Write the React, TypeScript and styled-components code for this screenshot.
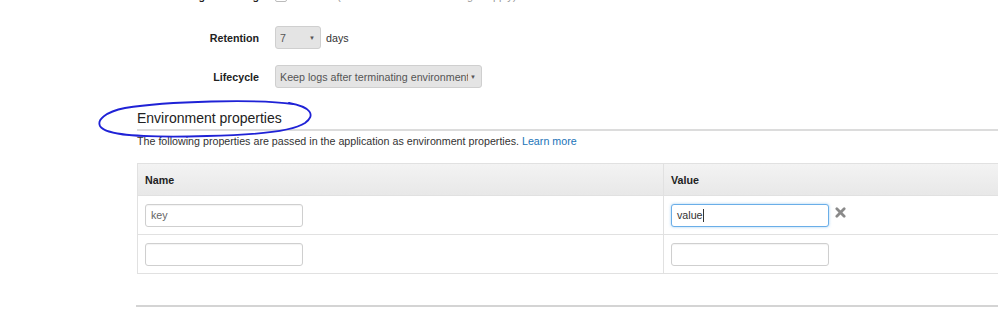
import styled, { createGlobalStyle } from 'styled-components'

const GlobalStyle = createGlobalStyle`
  html, body {
    margin: 0;
    padding: 0;
    background: #fff;
    overflow: hidden;
  }
  body {
    font-family: 'Liberation Sans', Arial, sans-serif;
    color: #333;
  }
`

export default function App() {
  return (
    <Page>
      <GlobalStyle />
      <Form>
        <Row>
          <Label>Log streaming</Label>
          <Control>
            <Check />
            <Muted>Enabled (standard CloudWatch charges apply)</Muted>
          </Control>
        </Row>
        <Row>
          <Label>Retention</Label>
          <Control>
            <FakeSelect width={46}>
              <SelectText>7</SelectText>
              <Caret>▼</Caret>
            </FakeSelect>
            <span>days</span>
          </Control>
        </Row>
        <Row>
          <Label>Lifecycle</Label>
          <Control>
            <FakeSelect width={207}>
              <SelectText>Keep logs after terminating environment</SelectText>
              <Caret>▼</Caret>
            </FakeSelect>
          </Control>
        </Row>
      </Form>

      <Section>
        <Heading>
          Environment properties
          <Scribble viewBox="0 0 216 38" fill="none">
            <path
              d="M196 3 C160 -2 70 0 28 7 C8 11 0 19 3 25 C8 34 40 37 110 35 C160 34 196 30 208 22 C219 14 214 6 192 2"
              stroke="#1f22d6"
              strokeWidth="1.8"
              strokeLinecap="round"
            />
          </Scribble>
        </Heading>
        <Intro>
          The following properties are passed in the application as environment properties.{' '}
          <Link>Learn more</Link>
        </Intro>

        <Table>
          <HeadRow>
            <Cell>Name</Cell>
            <Cell divider>Value</Cell>
          </HeadRow>
          <BodyRow>
            <Cell>
              <TextBox>key</TextBox>
            </Cell>
            <Cell divider>
              <TextBox focused>
                value<Cursor />
              </TextBox>
              <Remove viewBox="0 0 12 12">
                <path d="M2 2 L10 10 M10 2 L2 10" stroke="#8a8a8a" strokeWidth="3" strokeLinecap="round" />
              </Remove>
            </Cell>
          </BodyRow>
          <BodyRow>
            <Cell>
              <TextBox />
            </Cell>
            <Cell divider>
              <TextBox />
            </Cell>
          </BodyRow>
        </Table>

        <Rule />
      </Section>
    </Page>
  )
}

const Page = styled.div`
  width: 998px;
  height: 324px;
  overflow: hidden;
  padding-left: 137px;
  box-sizing: border-box;
`

const Form = styled.div`
  display: flex;
  flex-direction: column;
  gap: 16px;
  margin-top: -16px;
`

const Row = styled.div`
  display: flex;
  align-items: center;
  gap: 16px;
  height: 23px;
  &:first-child {
    margin-bottom: 3px;
  }
`

const Label = styled.div`
  width: 122px;
  text-align: right;
  font-size: 10.7px;
  font-weight: bold;
  color: #222;
`

const Control = styled.div`
  display: flex;
  align-items: center;
  gap: 5px;
  font-size: 10.7px;
  color: #333;
`

const Check = styled.span`
  width: 10px;
  height: 10px;
  border: 1px solid #bbb;
  border-radius: 2px;
  margin-right: 3px;
`

const Muted = styled.span`
  color: #999;
`

const FakeSelect = styled.div<{ width: number }>`
  display: flex;
  align-items: center;
  width: ${p => p.width}px;
  height: 23px;
  box-sizing: border-box;
  padding: 0 5px 0 4px;
  background: #e4e4e4;
  border: 1px solid #cfcfcf;
  border-radius: 3px;
  font-size: 10.7px;
  color: #555;
`

const SelectText = styled.span`
  flex: 1;
  white-space: nowrap;
  overflow: hidden;
`

const Caret = styled.span`
  font-size: 6px;
  color: #555;
  margin-left: 2px;
`

const Section = styled.div`
  margin-top: 22px;
`

const Heading = styled.div`
  position: relative;
  font-size: 14px;
  color: #222;
  padding-bottom: 3px;
  border-bottom: 2px solid #dcdcdc;
`

const Scribble = styled.svg`
  position: absolute;
  left: -40px;
  top: -9px;
  width: 216px;
  height: 38px;
  overflow: visible;
`

const Intro = styled.div`
  font-size: 10.7px;
  color: #333;
  margin-top: 4px;
`

const Link = styled.a`
  color: #1a73b8;
  cursor: pointer;
`

const Table = styled.div`
  margin-top: 16px;
  width: 900px;
  border: 1px solid #e1e1e1;
  border-right: none;
`

const HeadRow = styled.div`
  display: grid;
  grid-template-columns: 525px 1fr;
  height: 31px;
  align-items: stretch;
  background: linear-gradient(#f3f3f3, #e8e8e8);
  border-bottom: 1px solid #e1e1e1;
  font-size: 10.7px;
  font-weight: bold;
  color: #222;
`

const BodyRow = styled.div`
  display: grid;
  grid-template-columns: 525px 1fr;
  height: 38px;
  & + & {
    border-top: 1px solid #e1e1e1;
  }
`

const Cell = styled.div<{ divider?: boolean }>`
  display: flex;
  align-items: center;
  gap: 6px;
  padding-left: 7px;
  border-left: ${p => (p.divider ? '1px solid #e1e1e1' : 'none')};
`

const TextBox = styled.div<{ focused?: boolean }>`
  display: flex;
  align-items: center;
  width: 158px;
  height: 23px;
  box-sizing: border-box;
  padding-left: 5px;
  font-size: 10.7px;
  color: ${p => (p.focused ? '#333' : '#666')};
  background: #fff;
  border: 1px solid ${p => (p.focused ? '#6aaee8' : '#cfcfcf')};
  border-radius: 3px;
  box-shadow: ${p => (p.focused ? '0 0 3px rgba(102, 175, 233, 0.6)' : 'inset 0 1px 1px rgba(0,0,0,0.05)')};
`

const Cursor = styled.span`
  display: inline-block;
  width: 1px;
  height: 13px;
  background: #333;
`

const Remove = styled.svg`
  width: 11px;
  height: 11px;
  margin-bottom: 5px;
`

const Rule = styled.div`
  margin-top: 31px;
  border-top: 2px solid #d4d4d4;
  margin-left: -1px;
`
